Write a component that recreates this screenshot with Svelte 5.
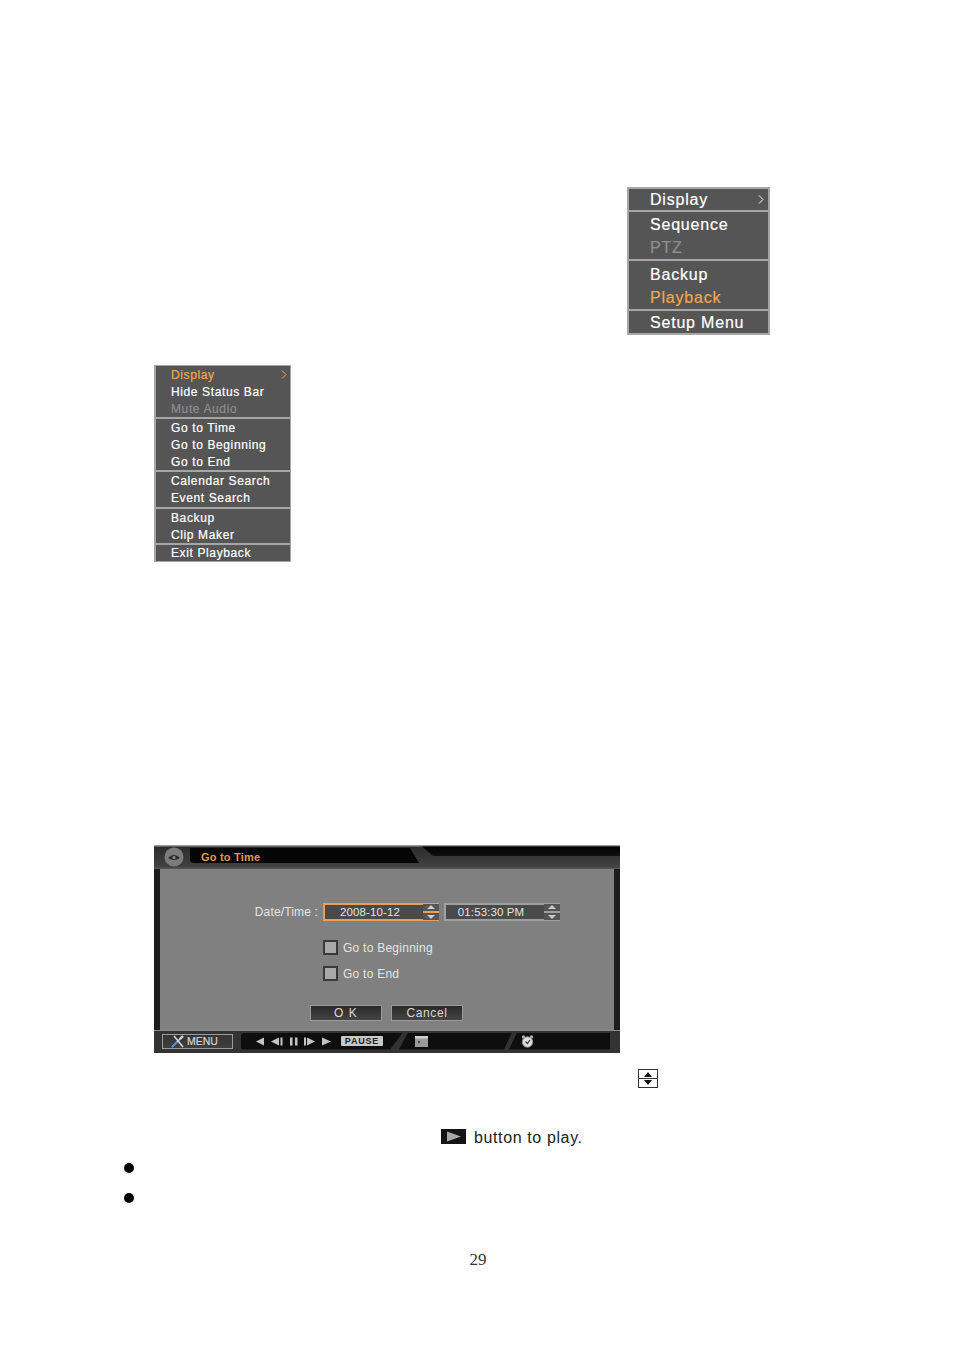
<script>
  const mainMenu = [
    [{ label: "Display", arrow: true }],
    [{ label: "Sequence" }, { label: "PTZ", off: true }],
    [{ label: "Backup" }, { label: "Playback", hot: true }],
    [{ label: "Setup Menu" }]
  ];
  const playMenu = [
    [{ label: "Display", arrow: true, hot: true }, { label: "Hide Status Bar" }, { label: "Mute Audio", off: true }],
    [{ label: "Go to Time" }, { label: "Go to Beginning" }, { label: "Go to End" }],
    [{ label: "Calendar Search" }, { label: "Event Search" }],
    [{ label: "Backup" }, { label: "Clip Maker" }],
    [{ label: "Exit Playback" }]
  ];
</script>

{#snippet menu(groups, cls)}
  <div class="menu {cls}">
    {#each groups as group}
      <div class="group">
        {#each group as item}
          <div class="item" class:hot={item.hot} class:off={item.off}>
            <span>{item.label}</span>
            {#if item.arrow}
              <svg class="arrow" width="6" height="9" viewBox="0 0 6 9"><path d="M1 .5L5 4.5L1 8.5" fill="none" stroke="currentColor" /></svg>
            {/if}
          </div>
        {/each}
      </div>
    {/each}
  </div>
{/snippet}

{#snippet spin(hot)}
  <div class="spin" class:hot>
    <svg width="16" height="7" viewBox="0 0 16 7"><path d="M8 1l4 4H4z" fill="#ccc" /></svg>
    <svg width="16" height="7" viewBox="0 0 16 7"><path d="M8 6L4 2h8z" fill="#ccc" /></svg>
  </div>
{/snippet}

<div class="page">
  {@render menu(mainMenu, "big")}
  {@render menu(playMenu, "small")}

  <div class="dialog">
    <div class="head">
      <svg class="head-bg" width="466" height="24" viewBox="0 0 466 24">
        <defs>
          <linearGradient id="strip" x1="0" y1="0" x2="0" y2="1">
            <stop offset="0" stop-color="#000" />
            <stop offset="1" stop-color="#111" />
          </linearGradient>
          <linearGradient id="lower" x1="0" y1="0" x2="0" y2="1">
            <stop offset="0" stop-color="#2a2a2a" />
            <stop offset="1" stop-color="#444" />
          </linearGradient>
        </defs>
        <rect width="466" height="24" fill="url(#lower)" />
        <rect width="466" height="1.5" fill="#9a9a9a" />
        <path d="M36 3H256l9 15H40q-4 0-4-4z" fill="#050505" />
        <path d="M268 1.5L279 11H466V1.5z" fill="url(#strip)" />
        <rect y="22.5" width="466" height="1.5" fill="#555" />
      </svg>
      <svg class="eye" width="20" height="20" viewBox="0 0 20 20">
        <circle cx="10" cy="10" r="9.5" fill="#7c7c7c" />
        <path d="M4 11q6-6 12 0q-6 4-12 0z" fill="#2b2b2b" />
        <circle cx="10" cy="10.5" r="1.6" fill="#888" />
      </svg>
      <span class="title">Go to Time</span>
    </div>

    <div class="body">
      <div class="row-date">
        <span class="label">Date/Time :</span>
        <div class="field hot">
          <div class="value">2008-10-12</div>
          {@render spin(true)}
        </div>
        <div class="field">
          <div class="value">01:53:30 PM</div>
          {@render spin(false)}
        </div>
      </div>
      <div class="check first"><i></i><span>Go to Beginning</span></div>
      <div class="check second"><i></i><span>Go to End</span></div>
      <div class="buttons">
        <div class="btn ok">O K</div>
        <div class="btn">Cancel</div>
      </div>
    </div>

    <div class="foot">
      <div class="menu-btn">
        <svg width="14" height="13" viewBox="0 0 14 13">
          <path d="M1 12L10 3M3 1l9 11" stroke="#cfd6e4" stroke-width="1.6" fill="none" />
          <path d="M9 4l3-3" stroke="#cfd6e4" stroke-width="2.4" />
          <path d="M1 12L6 7" stroke="#4f86d8" stroke-width="2" />
        </svg>
        <span>MENU</span>
      </div>
      <div class="seg transport">
        <svg width="77" height="9" viewBox="0 0 77 9" fill="#c4c4c4">
          <path d="M1 4.5L9 .5v8z" />
          <path d="M16 4.5L24 .5v8zM25.5 .5h2v8h-2z" />
          <path d="M35 .5h2.5v8H35zM40 .5h2.5v8H40z" />
          <path d="M49 .5h2v8h-2zM52 .5l8 4-8 4z" />
          <path d="M67 .5l9 4-9 4z" />
        </svg>
        <span class="pause">PAUSE</span>
      </div>
      <div class="seg cal">
        <svg width="13" height="11" viewBox="0 0 13 11">
          <rect width="13" height="11" fill="#9a9a9a" />
          <rect width="13" height="2.5" fill="#d0d0d0" />
          <rect x="3" y="5" width="2" height="2" fill="#444" />
        </svg>
      </div>
      <div class="seg clock">
        <svg width="13" height="13" viewBox="0 0 13 13">
          <circle cx="6.5" cy="7" r="5.2" fill="#e0e0e0" stroke="#8a8a8a" />
          <circle cx="2.5" cy="2" r="1.7" fill="#aaa" />
          <circle cx="10.5" cy="2" r="1.7" fill="#aaa" />
          <path d="M4.5 6.5L6.5 8.5L9 5" stroke="#333" stroke-width="1.2" fill="none" />
        </svg>
      </div>
    </div>
  </div>

  <div class="updown">
    <svg width="20" height="19" viewBox="0 0 20 19">
      <rect x=".5" y=".5" width="19" height="18" fill="#fff" stroke="#333" />
      <path d="M0 9.5h20" stroke="#333" />
      <path d="M10 3l4 5H6z" fill="#111" />
      <path d="M10 16l-4-5h8z" fill="#111" />
    </svg>
  </div>

  <div class="play-line">
    <svg width="25" height="15" viewBox="0 0 25 15">
      <rect width="25" height="15" fill="#141414" />
      <path d="M6 2.5L20 7.5L6 12.5z" fill="#a8a8a8" />
    </svg>
    <span>button to play.</span>
  </div>

  <div class="bullet one"></div>
  <div class="bullet two"></div>

  <div class="num">29</div>
</div>

<style>
  :global(body) {
    margin: 0;
    background: #fff;
  }

  .page {
    width: 954px;
    height: 1350px;
    overflow: hidden;
    padding-top: 187px;
    box-sizing: border-box;
    font-family: "Liberation Sans", Arial, sans-serif;
  }

  .menu {
    background: #a6a6a6;
    display: flex;
    flex-direction: column;
    box-sizing: border-box;
    color: #fff;
    -webkit-text-stroke: 0.2px currentColor;
  }

  .group {
    background: #555;
    display: flex;
    flex-direction: column;
    flex: none;
  }

  .item {
    display: flex;
    justify-content: space-between;
    align-items: center;
  }

  .item.hot { color: #f2a552; }
  .item.off { color: #8e8e8e; }

  .big {
    width: 143px;
    height: 148px;
    margin-left: 627px;
    padding: 2px;
    gap: 2px;
    font-size: 16px;
    letter-spacing: 0.8px;
  }

  .big .group:nth-child(1) { height: 21px; }
  .big .group:nth-child(2) { height: 47px; padding-top: 2px; box-sizing: border-box; }
  .big .group:nth-child(3) { height: 48px; padding-top: 2px; box-sizing: border-box; }
  .big .group:nth-child(4) { height: 22px; padding-top: 1px; box-sizing: border-box; }

  .big .item {
    height: 23.5px;
    padding: 0 4px 0 21px;
  }

  .big .group:nth-child(1) .item,
  .big .group:nth-child(4) .item { height: 21px; }

  .small {
    width: 137px;
    height: 197px;
    margin-left: 154px;
    margin-top: 30px;
    padding: 1px 1px 1px 2px;
    gap: 2px;
    font-size: 12px;
    letter-spacing: 0.62px;
  }

  .small .item {
    height: 17px;
    padding: 0 3px 0 15px;
  }

  .small .group:nth-child(3) { height: 35px; }
  .small .group:nth-child(5) .item { height: 16px; }

  .dialog {
    width: 466px;
    height: 208px;
    margin-left: 154px;
    margin-top: 283px;
    display: flex;
    flex-direction: column;
    background: #2a2a2a;
  }

  .head {
    position: relative;
    height: 24px;
    flex: none;
    display: flex;
    align-items: center;
  }

  .head-bg {
    position: absolute;
    left: 0;
    top: 0;
  }

  .eye {
    position: relative;
    margin-left: 10px;
  }

  .title {
    position: relative;
    margin-left: 17px;
    margin-top: -1px;
    color: #e09a4c;
    font-size: 11px;
    font-weight: 700;
    letter-spacing: 0.2px;
  }

  .body {
    flex: none;
    height: 161px;
    margin: 0 6px;
    box-sizing: border-box;
    background: #808080;
    color: #e4e4e4;
    font-size: 12px;
    padding-top: 34px;
    box-shadow: -6px 0 0 #1c1c1c, 6px 0 0 #1c1c1c;
  }

  .row-date {
    display: flex;
    align-items: center;
    height: 18px;
  }

  .label {
    width: 158px;
    text-align: right;
    margin-right: 5px;
    letter-spacing: 0.15px;
  }

  .field {
    width: 116px;
    height: 18px;
    box-sizing: border-box;
    border: 2px solid #a0a0a0;
    display: flex;
    margin-right: 5px;
    background: #4a4a4a;
  }

  .field.hot { border-color: #e8a055; }

  .value {
    flex: 1;
    padding-right: 8px;
    text-align: center;
    line-height: 14px;
    font-size: 11.5px;
    letter-spacing: 0.1px;
  }

  .spin {
    width: 16px;
    margin: -2px -2px -2px 0;
    display: flex;
    flex-direction: column;
    justify-content: space-between;
    background: #a0a0a0;
    padding: 1px 0;
  }

  .spin svg {
    display: block;
    background: #555;
  }

  .spin.hot { background: #e8a055; }

  .check {
    display: flex;
    align-items: center;
    gap: 5px;
    margin-left: 163px;
    height: 16px;
  }

  .check span {
    letter-spacing: 0.25px;
    padding-top: 1px;
  }

  .check.first { margin-top: 18px; }
  .check.second { margin-top: 10px; }

  .check i {
    width: 11px;
    height: 11px;
    background: #a8a8a8;
    border: 2px solid #3a3a3a;
    display: block;
  }

  .buttons {
    display: flex;
    gap: 9px;
    margin-left: 150px;
    margin-top: 24px;
  }

  .btn {
    width: 72px;
    height: 16px;
    box-sizing: border-box;
    border: 1px solid #9a9a9a;
    background: linear-gradient(#2a2a2a, #444);
    color: #d8d8d8;
    text-align: center;
    line-height: 14px;
    letter-spacing: 0.6px;
  }

  .btn.ok { letter-spacing: 1.1px; }

  .foot {
    flex: none;
    height: 23px;
    box-sizing: border-box;
    border-top: 1px solid #8a8a8a;
    background: #333;
    display: flex;
    align-items: center;
    padding: 0 0 2px 8px;
  }

  .menu-btn {
    width: 71px;
    height: 15px;
    box-sizing: border-box;
    border: 1px solid #9a9a9a;
    background: linear-gradient(#333, #3f3f3f);
    display: flex;
    align-items: center;
    gap: 2px;
    padding-left: 8px;
    color: #d4d4d4;
    font-size: 10.5px;
    -webkit-text-stroke: 0.2px currentColor;
    margin-right: 8px;
  }

  .seg {
    background: #0e0e0e;
    height: 17px;
    display: flex;
    align-items: center;
    box-sizing: border-box;
  }

  .transport {
    width: 162px;
    padding-left: 14px;
    gap: 9px;
    border-radius: 3px 0 0 3px;
    clip-path: polygon(0 0, 100% 0, 92% 100%, 0 100%);
  }

  .pause {
    background: #c8c8c8;
    color: #222;
    font-size: 9px;
    font-weight: 700;
    letter-spacing: 0.8px;
    line-height: 10px;
    width: 42px;
    text-align: center;
    border-radius: 1px;
  }

  .cal {
    width: 113px;
    margin-left: -4px;
    padding-left: 16px;
    clip-path: polygon(8% 0, 100% 0, 93% 100%, 0 100%);
  }

  .clock {
    width: 101px;
    margin-left: -3px;
    padding-left: 12px;
    clip-path: polygon(8% 0, 100% 0, 100% 100%, 0 100%);
  }

  .updown {
    margin-left: 638px;
    margin-top: 16px;
    height: 19px;
  }

  .updown svg,
  .play-line svg {
    display: block;
  }

  .play-line {
    margin-left: 441px;
    margin-top: 38px;
    display: flex;
    align-items: center;
    gap: 8px;
    height: 20px;
    font-size: 16px;
    letter-spacing: 0.62px;
    color: #222;
  }

  .play-line span {
    padding-top: 3px;
  }

  .bullet {
    width: 10px;
    height: 10px;
    border-radius: 50%;
    background: #000;
    margin-left: 124px;
  }

  .bullet.one { margin-top: 17px; }
  .bullet.two { margin-top: 20px; }

  .num {
    margin-top: 47px;
    text-align: center;
    padding-left: 2px;
    font-family: "Liberation Serif", serif;
    font-size: 17px;
    color: #333;
  }
</style>
